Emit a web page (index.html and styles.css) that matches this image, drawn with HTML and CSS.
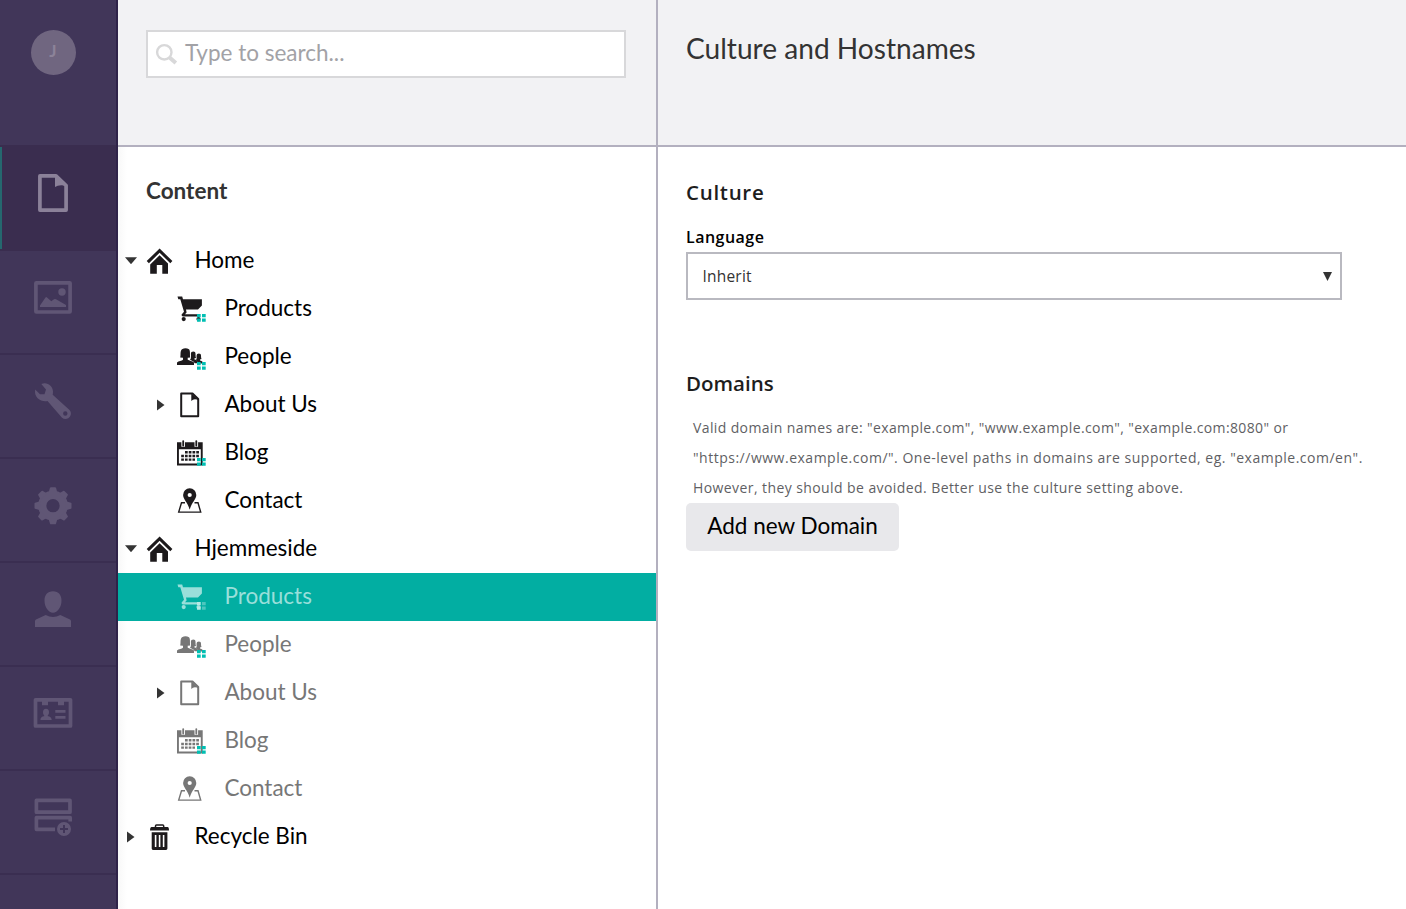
FILE: index.html
```html
<!DOCTYPE html>
<html lang="en">
<head>
<meta charset="utf-8">
<title>Culture and Hostnames</title>
<link rel="stylesheet" href="styles.css">
</head>
<body>
<svg class="defs" width="0" height="0" aria-hidden="true">
  <symbol id="home" viewBox="0 0 32 32"><path d="M15.6 3.5 28.4 16.1 26.3 18.2 15.6 7.7 4.9 18.2 2.7 16.1Z"/><path d="M15.6 10.2 24 18.5V28.7H18.3V20H12.8V28.7H6.2V19.500Z"/></symbol>
  <symbol id="cart" viewBox="0 0 32 32"><path d="M3.500 3.500H8.200L9 6.300H27.900V12.500L24 16.500H12L12.600 19.500 11 21.200H24.500V23.600H9.200Q7.300 23.300 7.600 21.400L10 18.700 6.300 6.200H4.300Z"/><circle cx="9.700" cy="26.100" r="2.100"/><circle cx="24.500" cy="26.100" r="2.100"/></symbol>
  <symbol id="people" viewBox="0 0 32 32"><path d="M3 24V21.500C4.500 20 8 19.700 9 18.700V16.800L6.200 16.600C7 14 5.800 10 8 8.300Q11.500 6.400 15 8.300C16.600 10 15.600 14 16.300 16.600L13.700 16.800V18.700C15 19.600 18.500 20 20 21.500V24Z"/><path d="M17 17C17.300 15 16.300 12 17.500 11Q19.300 9.800 21 11C22 12.500 21.200 15 22 16.900L20.500 17.300V18.400C22 18.800 23.500 19.500 24 20.500V22.300H20.800C19.500 20 17 19.400 16 19Z"/><path d="M22.600 18C22.800 16.500 22.200 14 23.200 13Q24.900 11.800 26.500 13C27.400 14.300 26.800 16.500 27.500 18L26 18.500V19.500C27.400 20 28.500 20.300 29 21.500V22.500H25C24.800 21 23 19.700 21.900 19Z"/></symbol>
  <symbol id="doc" viewBox="0 0 32 32"><path fill="none" stroke="currentColor" stroke-width="2" stroke-linejoin="round" d="M7.200 4.400H18.500L24.200 10V27.200H7.200Z"/><path d="M17.300 4 25 11.500Q20 9 17.300 12Z"/></symbol>
  <symbol id="calendar" viewBox="0 0 32 32"><path fill-rule="evenodd" d="M3 5.300H28.700V28.500H3ZM4.900 12.200V26.600H26.800V12.200Z"/><path fill="none" stroke="var(--row-bg)" stroke-width="3.600" d="M9.200 2.500V9.800M22.300 2.500V9.800"/><path fill="none" stroke="currentColor" stroke-width="1.800" stroke-linecap="round" d="M9.200 4.100V8.500M22.300 4.100V8.500"/><path fill="none" stroke="currentColor" stroke-width="2.400" stroke-dasharray="2.700 1.050" d="M11 15.300H25M7.200 19H25M7.200 22.600H21"/></symbol>
  <symbol id="pin" viewBox="0 0 32 32"><path fill-rule="evenodd" d="M15.700 3.300A6.600 6.600 0 0 1 22.300 10C22.300 14.500 17.800 17 15.700 24.700 13.600 17 9.100 14.500 9.100 10A6.600 6.600 0 0 1 15.700 3.300ZM15.700 7.900A2.100 2.100 0 1 0 15.700 12.100 2.100 2.100 0 1 0 15.700 7.900Z"/><path fill="none" stroke="currentColor" stroke-width="1.400" d="M11 17.700H7.500L4.700 27.100H26.700L24 17.700H20.500"/></symbol>
  <symbol id="trash" viewBox="0 0 32 32"><path fill="none" stroke="currentColor" stroke-width="1.500" d="M11.500 6.500V5Q11.500 4 12.500 4H18.700Q19.700 4 19.700 5V6.500"/><path d="M7.500 5.900H23.700Q25 6.200 25 9.600H6Q6 6.200 7.500 5.900Z"/><path fill-rule="evenodd" d="M7.700 11.200H23.400V27.500Q23.400 28.900 22 28.900H9Q7.700 28.900 7.700 27.500ZM10.800 14V26H12.400V14ZM14.800 14V26H16.400V14ZM18.800 14V26H20.400V14Z"/></symbol>
  <symbol id="grip" viewBox="0 0 9 8"><path d="M0 0H3.700V3.200H0ZM0 4.500H3.700V7.700H0Z"/><path class="far" d="M5 0H8.700V3.200H5ZM5 4.500H8.700V7.700H5Z"/></symbol>
</svg>
<div class="app">
  <nav class="rail">
    <div class="user"><span class="avatar">J</span></div>
    <div class="section active"><svg viewBox="0 0 48 48"><path fill="none" stroke="currentColor" stroke-width="3.700" stroke-linejoin="round" d="M10.900 6.900H27L37.100 16.500V41.100H10.900Z"/><path d="M26 6 38 17Q30 15 26 18Z"/></svg></div>
    <div class="section"><svg viewBox="0 0 48 48"><rect x="6.900" y="9.800" width="34.200" height="29.200" rx="0.500" fill="none" stroke="currentColor" stroke-width="3.700"/><circle cx="33" cy="19" r="3.700"/><path d="M11 34V32.500L16.500 24.500Q17.300 23.700 18 24.500L22.300 28.300 25 26.300Q26 25.700 27 26.300L37 32V34Z"/></svg></div>
    <div class="section"><svg viewBox="0 0 48 48"><path fill-rule="evenodd" d="M12.300 7C18 4.300 24 9 24 14.500Q24 16.500 23.700 17.800L40.500 33C45 38 38 45 33 40.800L18.500 24C13 25.500 4.500 21 6.200 12.500L11 17.200H15.500L17 12.500ZM36.300 34.300A2.200 2.200 0 1 0 36.300 38.700 2.200 2.200 0 1 0 36.300 34.300Z"/></svg></div>
    <div class="section"><svg viewBox="0 0 48 48"><g fill="none" stroke="currentColor"><circle cx="24" cy="24.700" r="10.800" stroke-width="8.300"/></g><path id="tooth" d="M19.500 12 21 6.700Q21.200 6.200 22 6.200H26Q26.800 6.200 27 6.700L28.500 12Z"/><use href="#tooth" transform="rotate(45 24 24.700)"/><use href="#tooth" transform="rotate(90 24 24.700)"/><use href="#tooth" transform="rotate(135 24 24.700)"/><use href="#tooth" transform="rotate(180 24 24.700)"/><use href="#tooth" transform="rotate(225 24 24.700)"/><use href="#tooth" transform="rotate(270 24 24.700)"/><use href="#tooth" transform="rotate(315 24 24.700)"/></svg></div>
    <div class="section"><svg viewBox="0 0 48 48"><path d="M24 6.200C29.500 6.200 32.500 10 32.500 15.500 32.500 22 28.500 27.700 24 27.700S15.500 22 15.500 15.500C15.500 10 18.500 6.200 24 6.200ZM6 42V36Q6 35 7 34.500L16.700 30Q24 33.800 31.300 30L41 34.500Q42 35 42 36V42Z"/></svg></div>
    <div class="section"><svg viewBox="0 0 48 48"><rect x="6.500" y="10.800" width="35" height="26.200" fill="none" stroke="currentColor" stroke-width="3.700" stroke-linejoin="round"/><path d="M13 12H19V16.300H13ZM29 12H35V16.300H29ZM26.300 21H36.500V23.700H26.300ZM26.300 27H36.500V29.800H26.300ZM17 19.800C19 19.800 20 21.200 20 23.300 20 25 19.300 26 18.500 27 21 27.800 22.500 28 22.700 31H11.500C11.500 28 13 27.800 15.500 27 14.700 26 14 25 14 23.300 14 21.200 15 19.800 17 19.800Z"/></svg></div>
    <div class="section"><svg viewBox="0 0 48 48"><g fill="none" stroke="currentColor" stroke-width="3.700" stroke-linejoin="round"><path d="M7.400 7.400H41V19.200H7.400ZM41.200 28.500V24.700H7.400V36.300H26"/></g><path fill-rule="evenodd" d="M35 29A7 7 0 1 0 35 43 7 7 0 1 0 35 29ZM34 32V35H31V37H34V40H36V37H39V35H36V32Z"/></svg></div>
  </nav>

  <aside class="sidebar">
    <header class="bar">
      <div class="search"><svg viewBox="0 0 24 24"><circle cx="9.300" cy="9.300" r="7.200" fill="none" stroke="currentColor" stroke-width="2.400"/><path fill="none" stroke="currentColor" stroke-width="4" d="M14.300 14.300 20.800 20"/></svg><span>Type to search...</span></div>
    </header>
    <h2 class="tree-title">Content</h2>
    <ul class="tree">
      <li class="row"><i class="caret down"></i><svg class="icon"><use href="#home"/></svg><span>Home</span></li>
      <li class="row child"><i class="caret"></i><b class="badge-wrap"><svg class="icon"><use href="#cart"/></svg><svg class="grip"><use href="#grip"/></svg></b><span>Products</span></li>
      <li class="row child"><i class="caret"></i><b class="badge-wrap"><svg class="icon"><use href="#people"/></svg><svg class="grip"><use href="#grip"/></svg></b><span>People</span></li>
      <li class="row child"><i class="caret right"></i><svg class="icon"><use href="#doc"/></svg><span>About Us</span></li>
      <li class="row child"><i class="caret"></i><b class="badge-wrap"><svg class="icon"><use href="#calendar"/></svg><svg class="grip"><use href="#grip"/></svg></b><span>Blog</span></li>
      <li class="row child"><i class="caret"></i><svg class="icon"><use href="#pin"/></svg><span>Contact</span></li>
      <li class="row"><i class="caret down"></i><svg class="icon"><use href="#home"/></svg><span>Hjemmeside</span></li>
      <li class="row child selected"><i class="caret"></i><b class="badge-wrap"><svg class="icon"><use href="#cart"/></svg><svg class="grip"><use href="#grip"/></svg></b><span>Products</span></li>
      <li class="row child muted"><i class="caret"></i><b class="badge-wrap"><svg class="icon"><use href="#people"/></svg><svg class="grip"><use href="#grip"/></svg></b><span>People</span></li>
      <li class="row child muted"><i class="caret right"></i><svg class="icon"><use href="#doc"/></svg><span>About Us</span></li>
      <li class="row child muted"><i class="caret"></i><b class="badge-wrap"><svg class="icon"><use href="#calendar"/></svg><svg class="grip"><use href="#grip"/></svg></b><span>Blog</span></li>
      <li class="row child muted"><i class="caret"></i><svg class="icon"><use href="#pin"/></svg><span>Contact</span></li>
      <li class="row"><i class="caret right"></i><svg class="icon"><use href="#trash"/></svg><span>Recycle Bin</span></li>
    </ul>
  </aside>

  <main class="panel">
    <header class="bar"><h1>Culture and Hostnames</h1></header>
    <div class="form">
      <h3 class="culture">Culture</h3>
      <div class="label">Language</div>
      <div class="select"><span>Inherit</span><svg width="9" height="9" viewBox="0 0 9 9"><path d="M0 0H9L4.500 9Z"/></svg></div>
      <h3 class="domains">Domains</h3>
      <p class="help"><span class="l1">Valid domain names are: "example.com", "www.example.com", "example.com:8080" or</span><span class="l2">"https://www.example.com/". One-level paths in domains are supported, eg. "example.com/en".</span><span class="l3">However, they should be avoided. Better use the culture setting above.</span></p>
      <button class="add">Add new Domain</button>
    </div>
  </main>
</div>
</body>
</html>
```
FILE: styles.css
```css
* { box-sizing: border-box; }
body { margin: 0; background: #fff; color: #000; font-family: Lato, sans-serif; }
h1, h2, h3, p, ul { margin: 0; padding: 0; }
svg { fill: currentColor; display: block; flex: none; }
.defs { position: absolute; }
.app { display: grid; grid-template-columns: 118px 540px 1fr; height: 909px; overflow: hidden; }

.rail { background: #413659; border-right: 2px solid #2f2349; color: #605675; overflow: hidden; }
.user { height: 147px; padding: 30px 0 0 31px; border-bottom: 2px solid #3a2d4f; }
.avatar { display: flex; align-items: center; justify-content: center; width: 45px; height: 45px; border-radius: 50%; background: #706680; color: #8c8399; font-size: 17px; font-weight: 700; line-height: 20px; padding: 0 1px 3px 0; }
.section { height: 104px; padding: 22px 0 0 29px; border-bottom: 2px solid #3a2e51; }
.section svg { width: 48px; height: 48px; }
.section.active { background: linear-gradient(#25686f, #25686f) 0 0 / 2px 102px no-repeat #3a2d4f; color: #8b8199; border-color: #3a2d4f; }

.sidebar { border-right: 2px solid #b3b0bf; background: linear-gradient(90deg, #f8f8f8, #fff 9px); }
.bar { height: 147px; background: #f2f2f4; border-bottom: 2px solid #b3b0bf; padding: 30px 28px 0; }
.search { display: flex; width: 480px; height: 48px; border: 2px solid #d8d8da; background: #fff; padding: 11px 0 0 7px; color: #d8d8d9; }
.search svg { width: 24px; height: 24px; }
.search span { margin: -4px 0 0 6px; color: #a2a2a6; font-size: 22.500px; line-height: 28px; }
.tree-title { margin: 30px 0 32px 28px; font-size: 22.500px; line-height: 28px; font-weight: 700; color: #333; }
.tree { list-style: none; }
.row { --row-bg: #fff; display: flex; align-items: center; height: 48px; padding-left: 7px; font-size: 22.500px; }
.row > span { margin-left: 18.400px; line-height: 28px; margin-top: -2px; }
.row.child { padding-left: 37px; }
.caret { width: 19px; height: 12px; flex: none; }
.caret.down { clip-path: polygon(0 2.300px, 12px 2.300px, 6px 9.300px); background: #343434; }
.caret.right { clip-path: polygon(2px 0.500px, 9.500px 6px, 2px 11.500px); background: #343434; }
.icon { width: 32px; height: 32px; color: #1d1a1c; }
.badge-wrap { position: relative; width: 32px; height: 32px; flex: none; }
.grip { position: absolute; left: 23px; top: 21px; width: 9px; height: 8px; color: #00bfb3; --far: #00bfb3; }
.far { fill: var(--far); }
.selected { background: #02aea2; color: #99dfda; --row-bg: #02aea2; }
.selected .icon { color: #99dfda; }
.selected .grip { color: #b7e9e5; --far: #4fc6be; }
.muted, .muted .icon { color: #777; }

.panel h1 { font-size: 28.100px; line-height: 36px; font-weight: 400; color: #333; }
.form { padding: 31px 28px; font-family: "Open Sans", sans-serif; }
h3 { font-size: 20.500px; line-height: 28px; font-weight: 600; color: #1d1d1d; }
.culture { letter-spacing: 0.700px; }
.label { font-size: 16px; line-height: 24px; font-weight: 600; margin: 19px 0 3px; letter-spacing: 0.480px; }
.select { display: flex; align-items: center; justify-content: space-between; width: 656px; height: 48px; border: 2px solid #b9b9c0; padding: 0 8px 0 14.500px; font-size: 15.500px; letter-spacing: 0.200px; color: #333; }
.domains { margin: 69px 0 16px; }
.help { padding-left: 7px; width: 700px; font-size: 14px; line-height: 30px; color: #5f5f64; }
.help span { display: block; white-space: nowrap; }
.l1 { letter-spacing: 0.375px; }
.l2 { letter-spacing: 0.507px; }
.l3 { letter-spacing: 0.415px; }
.add { display: block; width: 213px; height: 48px; border: 0; border-radius: 5px; background: #e8e8eb; color: #000; font: 22.500px/28px Lato, sans-serif; padding: 0 0 2px; }
```
